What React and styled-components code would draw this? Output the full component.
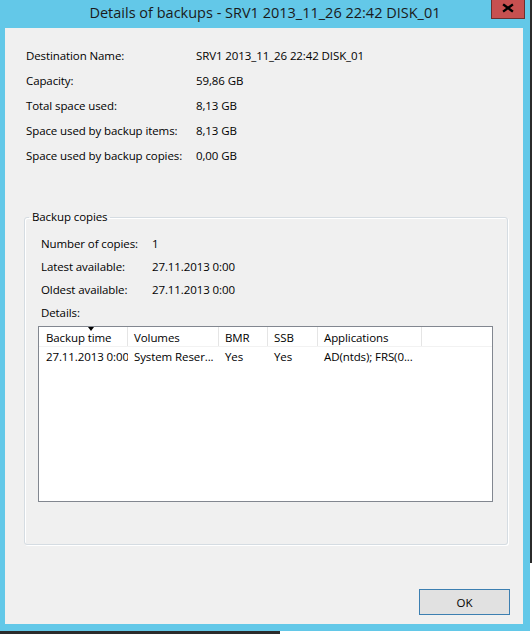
import React from 'react';
import styled, { createGlobalStyle } from 'styled-components';

const GlobalStyle = createGlobalStyle`
  html, body {
    margin: 0;
    padding: 0;
    background: #ffffff;
  }
  * {
    box-sizing: border-box;
  }
`;

const uiFont = `"Segoe UI", "Open Sans", "Noto Sans", sans-serif`;

const details = [
    {label: 'Destination Name:', value: 'SRV1 2013_11_26 22:42 DISK_01'},
    {label: 'Capacity:', value: '59,86 GB'},
    {label: 'Total space used:', value: '8,13 GB'},
    {label: 'Space used by backup items:', value: '8,13 GB'},
    {label: 'Space used by backup copies:', value: '0,00 GB'},
];

const copies = [
    {label: 'Number of copies:', value: '1'},
    {label: 'Latest available:', value: '27.11.2013 0:00'},
    {label: 'Oldest available:', value: '27.11.2013 0:00'},
];

const columns = [
    {title: 'Backup time', width: 89, pad: 7, sorted: true},
    {title: 'Volumes', width: 91, pad: 6},
    {title: 'BMR', width: 49, pad: 6},
    {title: 'SSB', width: 50, pad: 6},
    {title: 'Applications', width: 104, pad: 6},
];

const rows = [
    ['27.11.2013 0:00', 'System Reser...', 'Yes', 'Yes', 'AD(ntds); FRS(0...'],
];

// red caption button, drawn as one glyph
const CloseGlyph = () => (
    <svg width="34" height="19" viewBox="0 0 34 19">
        <rect x="0.5" y="-1" width="33" height="19.5" fill="#c75050" stroke="#6b3030" strokeWidth="1"/>
        <path d="M13 5 L21 11 M21 5 L13 11" stroke="#000" strokeWidth="2.3" strokeLinecap="square"/>
    </svg>
);

const App = () => {
    return (
        <>
            <GlobalStyle/>
            <Screen>
                <Top>
                    <Window>
                        <TitleBar>
                            <Title>Details of backups - SRV1 2013_11_26 22:42 DISK_01</Title>
                            <CloseButton><CloseGlyph/></CloseButton>
                        </TitleBar>
                        <Client>
                            <InfoGrid>
                                {details.map(d => (
                                    <React.Fragment key={d.label}>
                                        <span>{d.label}</span>
                                        <span>{d.value}</span>
                                    </React.Fragment>
                                ))}
                            </InfoGrid>

                            <GroupBox>
                                <Legend>Backup copies</Legend>
                                <GroupBody>
                                    <CopiesGrid>
                                        {copies.map(d => (
                                            <React.Fragment key={d.label}>
                                                <span>{d.label}</span>
                                                <span>{d.value}</span>
                                            </React.Fragment>
                                        ))}
                                        <span>Details:</span>
                                    </CopiesGrid>
                                    <ListView>
                                        <HeaderRow>
                                            {columns.map(c => (
                                                <HeaderCell key={c.title} $width={c.width} $pad={c.pad}>
                                                    {c.sorted && <SortArrow/>}
                                                    {c.title}
                                                </HeaderCell>
                                            ))}
                                        </HeaderRow>
                                        {rows.map((r, i) => (
                                            <DataRow key={i}>
                                                {r.map((cell, j) => (
                                                    <DataCell key={j} $width={columns[j].width} $pad={columns[j].pad}>
                                                        {cell}
                                                    </DataCell>
                                                ))}
                                            </DataRow>
                                        ))}
                                    </ListView>
                                </GroupBody>
                            </GroupBox>

                            <ButtonRow>
                                <OkButton type="button">OK</OkButton>
                            </ButtonRow>
                        </Client>
                    </Window>
                    <RightEdge/>
                </Top>
                <BottomEdge>
                    <DarkPart/>
                </BottomEdge>
            </Screen>
        </>
    );
};

const Screen = styled.div`
  width: 532px;
  height: 634px;
  display: flex;
  flex-direction: column;
  overflow: hidden;
  font-family: ${uiFont};
  font-size: 11.5px;
  letter-spacing: -0.1px;
  color: #000;
`;

const Top = styled.div`
  display: flex;
  height: 631px;
`;

const Window = styled.div`
  width: 530px;
  height: 631px;
  flex-shrink: 0;
  background-color: #63c8e8;
  display: flex;
  flex-direction: column;
`;

const RightEdge = styled.div`
  width: 2px;
  background: linear-gradient(#2b2b2b 0, #2b2b2b 563px, #ffffff 563px);
`;

const BottomEdge = styled.div`
  height: 3px;
  display: flex;
  background: #ffffff;
`;

const DarkPart = styled.div`
  width: 280px;
  background: #2b2b2b;
`;

const TitleBar = styled.div`
  position: relative;
  height: 28px;
  background-color: #63c8e8;
`;

const Title = styled.div`
  text-align: center;
  font-size: 14.5px;
  letter-spacing: 0;
  line-height: 20px;
  padding-top: 3px;
  color: #1a1a1a;
  white-space: nowrap;
`;

const CloseButton = styled.span`
  position: absolute;
  top: 0;
  right: 5px;
  z-index: 2;
  display: block;
  width: 34px;
  height: 19px;
  line-height: 0;

  svg {
    display: block;
  }
`;

const Client = styled.div`
  flex: 1;
  margin: 0 7px 7px 5px;
  background: #f0f0f0;
  display: flex;
  flex-direction: column;
  padding-top: 15px;
`;

const InfoGrid = styled.div`
  display: grid;
  grid-template-columns: 170px auto;
  grid-auto-rows: 25px;
  align-items: center;
  padding-left: 21px;
  white-space: nowrap;
`;

const GroupBox = styled.fieldset`
  margin: 41px 15px 0 19px;
  padding: 0;
  border: 1px solid #d5dce2;
  border-radius: 3px;
  box-shadow: inset 1px 1px 0 #ffffff, 1px 1px 0 #ffffff;
  min-width: 0;
`;

const Legend = styled.legend`
  margin-left: 4px;
  padding: 0 3px;
  line-height: 16px;
`;

const GroupBody = styled.div`
  padding: 7px 14px 42px 13px;
`;

const CopiesGrid = styled.div`
  display: grid;
  grid-template-columns: 111px auto;
  grid-auto-rows: 23px;
  align-items: center;
  padding-left: 3px;
  white-space: nowrap;
`;

const ListView = styled.div`
  margin-top: 2px;
  height: 176px;
  background: #ffffff;
  border: 1px solid #828790;
`;

const HeaderRow = styled.div`
  display: flex;
  height: 20px;
  border-bottom: 1px solid #f2f2f2;
`;

const HeaderCell = styled.div`
  position: relative;
  width: ${p => p.$width}px;
  padding-left: ${p => p.$pad}px;
  padding-top: 1px;
  border-right: 1px solid #e5e5e5;
  line-height: 19px;
  white-space: nowrap;
`;

const SortArrow = styled.span`
  position: absolute;
  left: 49px;
  top: 0;
  width: 0;
  height: 0;
  border-left: 3px solid transparent;
  border-right: 3px solid transparent;
  border-top: 4px solid #000;
`;

const DataRow = styled.div`
  display: flex;
  height: 19px;
`;

const DataCell = styled.div`
  width: ${p => p.$width}px;
  padding-left: ${p => p.$pad}px;
  line-height: 19px;
  white-space: nowrap;
  overflow: hidden;
`;

const ButtonRow = styled.div`
  margin-top: auto;
  display: flex;
  justify-content: flex-end;
  padding: 0 13px 9px 0;
`;

const OkButton = styled.button`
  width: 91px;
  height: 26px;
  background: #e1e1e1;
  border: 1px solid #3c7fb1;
  border-radius: 0;
  font-family: ${uiFont};
  font-size: 11.5px;
  color: #000;
  padding: 0;
`;

export default App;
